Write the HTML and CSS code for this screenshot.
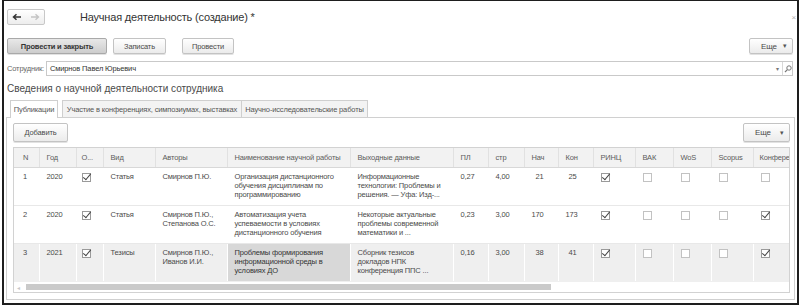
FILE: index.html
```html
<!DOCTYPE html>
<html lang="ru">
<head>
<meta charset="utf-8">
<title>Научная деятельность (создание)</title>
<link rel="stylesheet" href="styles.css">
</head>
<body>
<div class="frame">
  <div class="topbar">
    <div class="nav">
      <span class="arrow"><svg width="10" height="8" viewBox="0 0 10 8"><path d="M9 4 H2 M4.5 1.2 L1.5 4 L4.5 6.8" fill="none" stroke="#333" stroke-width="1.5"/></svg></span>
      <span class="arrow"><svg width="10" height="8" viewBox="0 0 10 8"><path d="M1 4 H8 M5.5 1.2 L8.5 4 L5.5 6.8" fill="none" stroke="#c4c4c4" stroke-width="1.4"/></svg></span>
    </div>
    <div class="title">Научная деятельность (создание) *</div>
    <div class="close">&#215;</div>
  </div>

  <div class="toolbar">
    <div class="btn primary w-post-close">Провести и закрыть</div>
    <div class="btn w-save">Записать</div>
    <div class="btn w-post">Провести</div>
    <div class="btn more">Еще <span class="caret">&#9662;</span></div>
  </div>

  <div class="field-row">
    <div class="label">Сотрудник:</div>
    <div class="input">
      <span class="value">Смирнов Павел Юрьевич</span>
      <span class="dd">&#9662;</span>
      <span class="open"><svg width="8" height="8" viewBox="0 0 8 8"><circle cx="5" cy="3" r="2.2" fill="none" stroke="#777" stroke-width="1"/><path d="M3.4 4.6 L1 7" stroke="#777" stroke-width="1.2"/></svg></span>
    </div>
  </div>

  <div class="section-title">Сведения о научной деятельности сотрудника</div>

  <div class="tabs">
    <div class="tab active t1">Публикации</div>
    <div class="tab t2">Участие в конференциях, симпозиумах, выставках</div>
    <div class="tab t3">Научно-исследовательские работы</div>
  </div>

  <div class="panel">
    <div class="panel-toolbar">
      <div class="btn add">Добавить</div>
      <div class="btn more more2">Еще <span class="caret">&#9662;</span></div>
    </div>

    <div class="grid">
      <table>
        <colgroup>
          <col class="c-n"><col class="c-year"><col class="c-o"><col class="c-kind"><col class="c-auth">
          <col class="c-name"><col class="c-out"><col class="c-pl"><col class="c-str"><col class="c-beg">
          <col class="c-end"><col class="c-rinc"><col class="c-vak"><col class="c-wos"><col class="c-scop"><col class="c-conf">
        </colgroup>
        <thead>
          <tr>
            <th class="n">N</th><th>Год</th><th class="o">О...</th><th>Вид</th><th>Авторы</th>
            <th>Наименование научной работы</th><th>Выходные данные</th><th>ПЛ</th><th>стр</th><th>Нач</th>
            <th>Кон</th><th>РИНЦ</th><th>ВАК</th><th>WoS</th><th>Scopus</th><th class="conf">Конферен</th>
          </tr>
        </thead>
        <tbody>
          <tr>
            <td class="n">1</td><td>2020</td><td class="o"><span class="cb on"></span></td><td>Статья</td><td>Смирнов П.Ю.</td>
            <td>Организация дистанционного<br>обучения дисциплинам по<br>программированию</td>
            <td>Информационные<br>технологии: Проблемы и<br>решения. — Уфа: Изд-...</td>
            <td>0,27</td><td>4,00</td><td class="num beg">21</td><td class="num end">25</td>
            <td><span class="cb on"></span></td><td><span class="cb"></span></td><td><span class="cb"></span></td><td><span class="cb"></span></td><td><span class="cb"></span></td>
          </tr>
          <tr>
            <td class="n">2</td><td>2020</td><td class="o"><span class="cb on"></span></td><td>Статья</td><td>Смирнов П.Ю.,<br>Степанова О.С.</td>
            <td>Автоматизация учета<br>успеваемости в условиях<br>дистанционного обучения</td>
            <td>Некоторые актуальные<br>проблемы современной<br>математики и ...</td>
            <td>0,23</td><td>3,00</td><td class="num beg">170</td><td class="num end">173</td>
            <td><span class="cb on"></span></td><td><span class="cb"></span></td><td><span class="cb"></span></td><td><span class="cb"></span></td><td><span class="cb on"></span></td>
          </tr>
          <tr class="selected">
            <td class="n">3</td><td>2021</td><td class="o"><span class="cb on"></span></td><td>Тезисы</td><td>Смирнов П.Ю.,<br>Иванов И.И.</td>
            <td class="focused">Проблемы формирования<br>информационной среды в<br>условиях ДО</td>
            <td>Сборник тезисов<br>докладов НПК<br>конференция ППС ...</td>
            <td>0,16</td><td>3,00</td><td class="num beg">38</td><td class="num end">41</td>
            <td><span class="cb on"></span></td><td><span class="cb"></span></td><td><span class="cb"></span></td><td><span class="cb"></span></td><td><span class="cb on"></span></td>
          </tr>
        </tbody>
      </table>
      <div class="hscroll">
        <span class="sarrow">&#9666;</span>
        <div class="thumb"></div>
      </div>
    </div>
  </div>
</div>
</body>
</html>
```

FILE: styles.css
```css
* { box-sizing: border-box; }

html, body {
  margin: 0;
  padding: 0;
  background: #fff;
}

body {
  width: 803px;
  height: 308px;
  overflow: hidden;
  font-family: "Liberation Sans", Arial, sans-serif;
  font-size: 7.5px;
  letter-spacing: -0.15px;
  color: #4a4a4a;
}

.frame {
  margin-left: 2px;
  width: 797px;
  height: 305px;
  border: 2px solid #1e1e1e;
  border-top-width: 1px;
  padding: 0 3px;
  display: flex;
  flex-direction: column;
}

/* top bar */
.topbar {
  margin-top: 8px;
  height: 16px;
  display: flex;
  align-items: center;
}

.nav {
  width: 38px;
  height: 16px;
  border: 1px solid #c8c8c8;
  border-radius: 2px;
  background: linear-gradient(#ffffff, #ededed);
  display: flex;
}

.arrow {
  flex: 1;
  display: flex;
  align-items: center;
  justify-content: center;
}

.title {
  margin-left: 35px;
  font-size: 11px;
  letter-spacing: -0.2px;
  color: #333;
}

.close {
  margin-left: auto;
  margin-right: -2px;
  font-size: 8px;
  color: #b0b0b0;
}

/* toolbar */
.toolbar {
  margin-top: 13px;
  height: 16px;
  display: flex;
}

.btn {
  height: 16px;
  border: 1px solid #c3c3c3;
  border-radius: 2px;
  background: linear-gradient(#ffffff, #ebebeb);
  box-shadow: 0 1px 0 #e2e2e2;
  display: flex;
  align-items: center;
  justify-content: center;
  color: #4a4a4a;
  white-space: nowrap;
}

.btn.primary {
  background: linear-gradient(#e8e8e8, #cdcdcd);
  border-color: #a9a9a9;
  font-weight: bold;
  color: #333;
}

.w-post-close { width: 100px; }
.w-save { width: 53px; margin-left: 6px; }
.w-post { width: 52px; margin-left: 16px; }

.more {
  margin-left: auto;
  width: 44px;
  margin-right: 1px;
  justify-content: space-between;
  padding: 0 5px 0 11px;
  font-size: 8px;
}

.caret { font-size: 7px; color: #555; }

/* employee field */
.field-row {
  margin-top: 7px;
  height: 15px;
  display: flex;
  align-items: center;
}

.label {
  width: 39px;
  color: #666;
}

.input {
  flex: 1;
  margin-right: 1px;
  height: 15px;
  border: 1px solid #c9c9c9;
  display: flex;
  align-items: center;
}

.value {
  flex: 1;
  padding-left: 3px;
  color: #333;
}

.dd {
  width: 10px;
  text-align: center;
  font-size: 6px;
  color: #777;
}

.open {
  width: 10px;
  height: 13px;
  border-left: 1px solid #d8d8d8;
  display: flex;
  align-items: center;
  justify-content: center;
}

/* section */
.section-title {
  margin-top: 7px;
  font-size: 10px;
  line-height: 12px;
  letter-spacing: 0;
  color: #4a4a4a;
}

/* tabs */
.tabs {
  margin-top: 5px;
  height: 17px;
  display: flex;
  position: relative;
  z-index: 1;
}

.tab {
  height: 17px;
  border: 1px solid #cfcfcf;
  border-bottom: none;
  background: #f3f3f3;
  display: flex;
  align-items: center;
  justify-content: center;
  color: #555;
  white-space: nowrap;
}

.tab.active {
  background: #fff;
  height: 18px;
}

.t1 { margin-left: 3px; width: 48px; }
.t2 { margin-left: 4px; width: 180px; }
.t3 { width: 126px; border-left: none; }

/* panel */
.panel {
  margin: 0 -1px;
  height: 183px;
  border: 1px solid #d0d0d0;
  padding: 5px 4px 0 6px;
}

.panel-toolbar {
  height: 19px;
  display: flex;
}

.btn.add {
  width: 55px;
  height: 19px;
}

.more2 {
  width: 47px;
  height: 19px;
  margin-right: 0;
}

/* grid */
.grid {
  margin-top: 5px;
  height: 146px;
  border: 1px solid #d2d2d2;
  overflow: hidden;
}

table {
  width: 777px;
  table-layout: fixed;
  border-collapse: collapse;
}

.c-n { width: 25px; }
.c-year { width: 37px; }
.c-o { width: 27px; }
.c-kind { width: 52px; }
.c-auth { width: 72px; }
.c-name { width: 123px; }
.c-out { width: 103px; }
.c-pl { width: 35px; }
.c-str { width: 36px; }
.c-beg { width: 34px; }
.c-end { width: 35px; }
.c-rinc { width: 42px; }
.c-vak { width: 38px; }
.c-wos { width: 38px; }
.c-scop { width: 42px; }
.c-conf { width: 38px; }

th {
  height: 19px;
  padding: 0 0 0 7px;
  background: #f2f2f2;
  border-right: 1px solid #e1e1e1;
  border-bottom: 1px solid #d8d8d8;
  font-weight: normal;
  text-align: left;
  color: #5c5c5c;
  white-space: nowrap;
  overflow: hidden;
}

th.conf { padding-left: 6px; }

td {
  height: 38px;
  padding: 4px 2px 0 7px;
  vertical-align: top;
  line-height: 9px;
  border-right: 1px solid #fff;
  border-bottom: 1px solid #e8e8e8;
  color: #4a4a4a;
  white-space: nowrap;
  overflow: hidden;
}

th.n, td.n { padding-left: 9px; }
th.o { padding-left: 5px; }
td.o { padding-left: 5px; }

td.num { text-align: right; }
td.beg { padding-right: 14px; }
td.end { padding-right: 16px; }

tr.selected td {
  background: #efefef;
  border-bottom-color: #efefef;
}

tr.selected td.focused {
  background: #d8d8d8;
  color: #333;
}

/* checkbox */
.cb {
  display: inline-block;
  position: relative;
  width: 9px;
  height: 9px;
  margin-top: 1px;
  border: 1px solid #c2c2c2;
  background: #fff;
}

.cb.on { border-color: #9a9a9a; }

.cb.on::after {
  content: "";
  position: absolute;
  left: 2px;
  top: -2px;
  width: 3px;
  height: 7px;
  border-right: 1.5px solid #444;
  border-bottom: 1.5px solid #444;
  transform: rotate(40deg);
}

/* horizontal scrollbar */
.hscroll {
  height: 11px;
  display: flex;
  align-items: center;
  padding-left: 3px;
}

.sarrow {
  width: 8px;
  font-size: 6px;
  color: #c8c8c8;
}

.thumb {
  margin-left: 1px;
  width: 525px;
  height: 6px;
  background: #cacaca;
}
```
